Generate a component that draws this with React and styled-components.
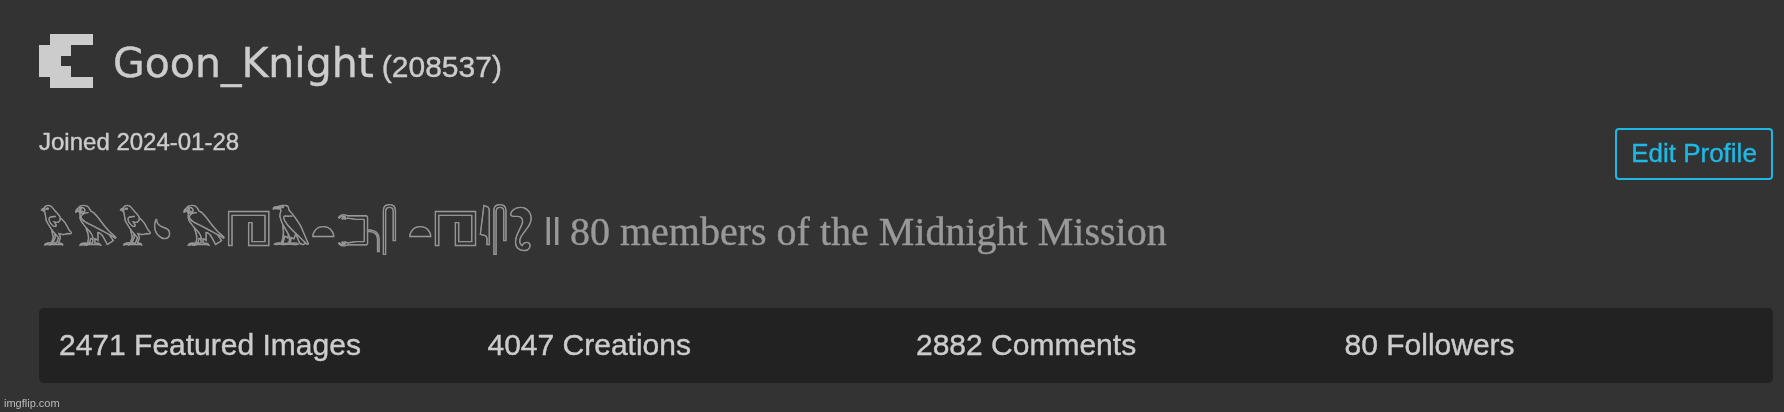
import React from "react";
import styled, { createGlobalStyle } from "styled-components";

const stats = [
  { count: 2471, label: "Featured Images" },
  { count: 4047, label: "Creations" },
  { count: 2882, label: "Comments" },
  { count: 80, label: "Followers" },
];

const App = () => {
  return (
    <>
      <GlobalStyle />
      <Root>
        <Header>
          <UserIcon viewBox="0 0 5 5" shapeRendering="crispEdges">
            <path d="M1 0H5V1H3V2H2V3H3V4H5V5H1V4H0V1H1Z" />
          </UserIcon>
          <UserName>Goon_Knight</UserName>
          <UserId>(208537)</UserId>
        </Header>

        <InfoRow>
          <Joined>Joined 2024-01-28</Joined>
          <EditButton>Edit Profile</EditButton>
        </InfoRow>

        <Tagline>
          <Glyphs>{"𓅱𓅃𓅱\u{1313C} 𓅃𓉔𓄿𓏏𓂕𓋴 𓏏𓉔𓇋𓋴\u{130C7}"}</Glyphs>
          <Bars>ll</Bars>
          <Motto>80 members of the Midnight Mission</Motto>
        </Tagline>

        <Stats>
          {stats.map((item) => (
            <li key={item.label}>
              {item.count} {item.label}
            </li>
          ))}
        </Stats>

        <Watermark>imgflip.com</Watermark>
      </Root>
    </>
  );
};

export default App;

const GlobalStyle = createGlobalStyle`
  * {
    box-sizing: border-box;
  }
  body {
    margin: 0;
    background: #333;
    color: #ccc;
    font-family: "Liberation Sans", Arial, sans-serif;
    -webkit-text-stroke: 0.4px currentColor;
  }
`;

const Root = styled.main`
  display: flex;
  flex-direction: column;
  height: 412px;
  padding: 34px 11px 0 39px;
  overflow: hidden;
  will-change: transform;
`;

const Header = styled.header`
  display: flex;
  align-items: baseline;
  height: 54px;
`;

const UserIcon = styled.svg`
  width: 54px;
  height: 54px;
  margin-right: 20px;
  align-self: flex-start;
  fill: #ccc;
`;

const UserName = styled.h1`
  margin: 0;
  font: 400 41px/58px "DejaVu Sans", Verdana, sans-serif;
`;

const UserId = styled.span`
  margin-left: 8px;
  font-size: 30px;
`;

const InfoRow = styled.div`
  display: flex;
  justify-content: space-between;
  height: 52px;
  margin-top: 40px;
`;

const Joined = styled.div`
  font-size: 24px;
  line-height: 28px;
`;

const EditButton = styled.button`
  width: 158px;
  height: 52px;
  padding: 0 0 1px;
  border: 2px solid #1fb8e6;
  border-radius: 4px;
  background: transparent;
  color: #1fb8e6;
  font: 26px "Liberation Sans", Arial, sans-serif;
  -webkit-text-stroke: 0.4px currentColor;
`;

const Tagline = styled.div`
  display: flex;
  align-items: baseline;
  height: 60px;
  margin-top: 15px;
  color: #999;
  font-size: 40px;
  line-height: 60px;
  white-space: pre;
`;

const Glyphs = styled.span`
  width: 505px;
  font-family: "Noto Sans Egyptian Hieroglyphs", "Liberation Serif", serif;
  -webkit-text-stroke: 0.6px currentColor;
`;

const Bars = styled.span`
  width: 26px;
  font-size: 38px;
  -webkit-text-stroke: 0;
`;

const Motto = styled.span`
  font-family: "Liberation Serif", "Times New Roman", serif;
`;

const Stats = styled.ul`
  display: grid;
  grid-template-columns: repeat(4, 1fr);
  height: 75px;
  margin: 53px 0 0;
  padding: 0 0 0 20px;
  border-radius: 5px;
  background: #222;
  list-style: none;
  font-size: 30px;
  line-height: 74px;
`;

const Watermark = styled.div`
  margin: 13px 0 0 -35px;
  color: #bbb;
  font-size: 11px;
  line-height: 14px;
  -webkit-text-stroke: 0;
`;
